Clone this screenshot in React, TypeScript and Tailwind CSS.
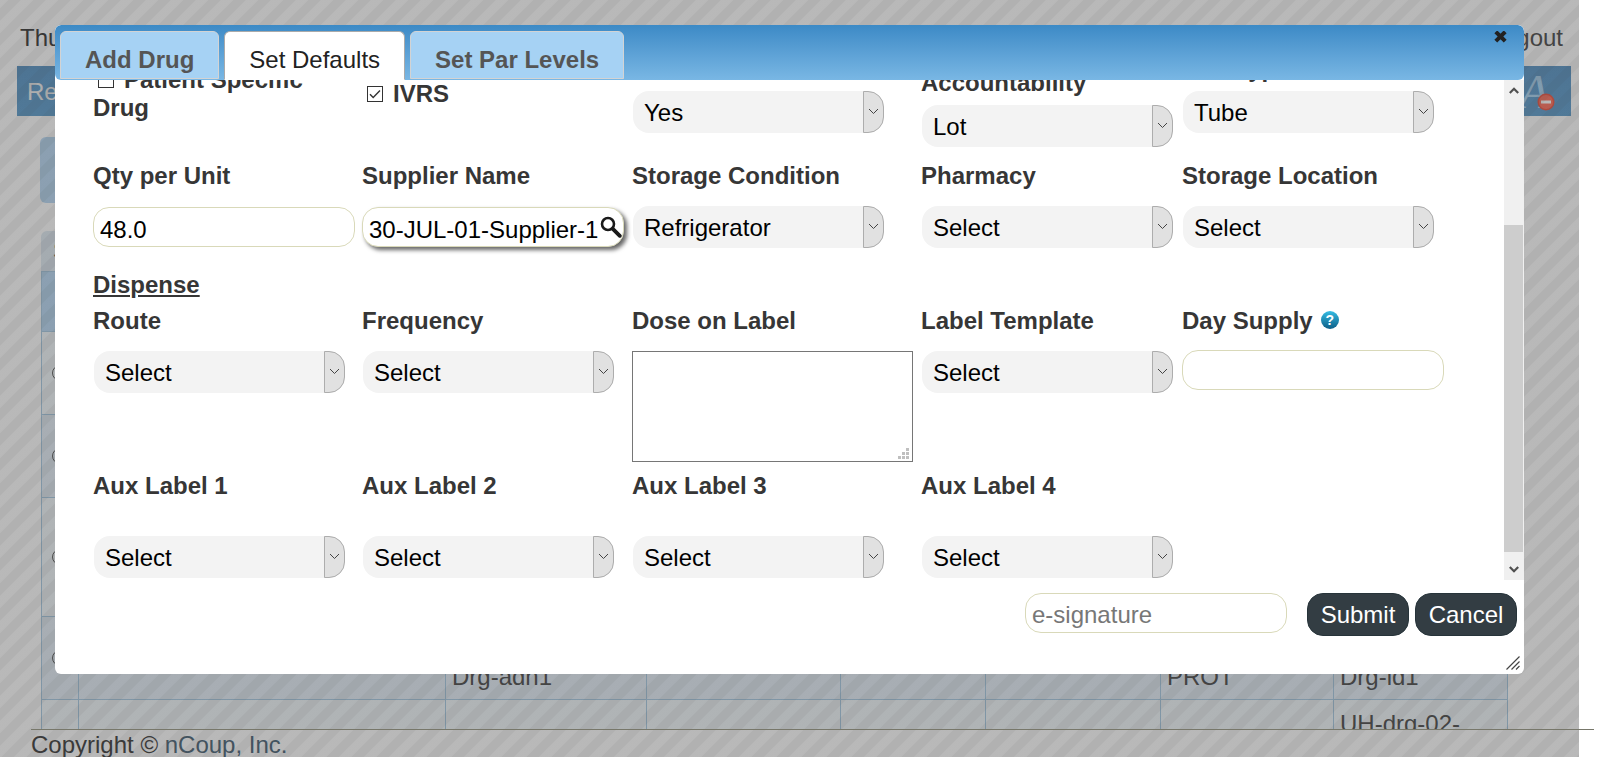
import React, { useId } from "react";
import { clsx } from "clsx";

function Chevron() {
  return (
    <span className="pointer-events-none absolute inset-y-0 right-0 grid w-[21px] place-items-center rounded-r-2xl border border-[#adadad] bg-[#e1e1e1] pb-px">
      <svg width="11" height="7" viewBox="0 0 11 7" fill="none" stroke="#444" strokeWidth="1">
        <path d="M1 1l4.5 4.5L10 1" />
      </svg>
    </span>
  );
}

function SelectBox({ id, value, ariaLabel }: { id?: string; value: string; ariaLabel?: string }) {
  return (
    <div className="relative ml-px w-[251px]">
      <select
        id={id}
        aria-label={ariaLabel}
        defaultValue={value}
        className="block h-[42px] w-full appearance-none rounded-2xl bg-[#f3f3f3] pt-0.5 pr-6 pl-[11px] text-black"
      >
        <option>{value}</option>
      </select>
      <Chevron />
    </div>
  );
}

const inputClass =
  "block h-10 w-[262px] rounded-2xl border border-[#d9d9b9] bg-white px-1.5 text-black placeholder:text-[#777]";

type FieldProps = {
  label: React.ReactNode;
  gap?: string;
  render: (id: string) => React.ReactNode;
};

function Field({ label, gap = "gap-4", render }: FieldProps) {
  const id = useId();
  return (
    <div className={clsx("flex flex-col items-start", gap)}>
      <label htmlFor={id} className="font-bold">
        {label}
      </label>
      {render(id)}
    </div>
  );
}

function SelectField({ label, value = "Select", gap }: { label: React.ReactNode; value?: string; gap?: string }) {
  return <Field label={label} gap={gap} render={(id) => <SelectBox id={id} value={value} />} />;
}

function Check({ label, checked = false }: { label: string; checked?: boolean }) {
  return (
    <label className="block font-bold">
      <span className="relative mr-2.5 ml-[5px] inline-block size-4">
        <input
          type="checkbox"
          defaultChecked={checked}
          className="peer block size-4 appearance-none border border-[#333] bg-white"
        />
        <svg
          viewBox="0 0 16 16"
          className="pointer-events-none absolute inset-0 hidden peer-checked:block"
          fill="none"
          stroke="#333"
          strokeWidth="1.4"
        >
          <path d="M3 8.2l3.2 3.3L13 4.6" />
        </svg>
      </span>
      {label}
    </label>
  );
}

const rowClass = "grid grid-cols-[269fr_270fr_289fr_261fr_322fr]";

function HelpIcon() {
  return (
    <span className="ml-2 inline-grid size-[18px] place-items-center rounded-full bg-linear-to-b from-[#36bde3] to-[#0d5f88] align-[4px] text-sm leading-none text-white">
      ?
    </span>
  );
}

const cellBorder = "border border-[#a6c9e2] px-1.5";

function BackgroundTable() {
  const rows = [
    { height: "h-[83px]", tone: "bg-[#f1f7fa]", align: "align-bottom pb-2", cells: ["", "", "", "", "", "", ""] },
    { height: "h-[83px]", tone: "bg-[#e4eef7]", align: "align-bottom pb-2", cells: ["", "", "", "", "", "", ""] },
    { height: "h-[119px]", tone: "bg-[#f1f7fa]", align: "align-bottom pb-2", cells: ["", "", "", "", "", "", ""] },
    {
      height: "h-[83px]",
      tone: "bg-[#e4eef7]",
      align: "align-bottom pb-2",
      cells: ["", "Drg-adn1", "", "", "", "PROT", "Drg-id1"],
    },
    {
      height: "h-[83px]",
      tone: "bg-[#f1f7fa]",
      align: "align-top pt-2.5",
      cells: ["", "", "", "", "", "", "UH-drg-02-"],
    },
  ];
  return (
    <div className="mt-7 mr-[72px] ml-[41px]">
      <div className="h-10 rounded-t-md bg-[#dfeaf3] pt-1.5 pl-3">S</div>
      <table className="w-full table-fixed border-collapse">
        <colgroup>
          <col className="w-[37px]" />
          <col className="w-[367px]" />
          <col className="w-[201px]" />
          <col className="w-[194px]" />
          <col className="w-[145px]" />
          <col className="w-[175px]" />
          <col className="w-[173px]" />
          <col className="w-[174px]" />
        </colgroup>
        <thead>
          <tr className="h-[60px] bg-[#b8d8f4]">
            {Array.from({ length: 8 }, (_, i) => (
              <th key={i} className={cellBorder} />
            ))}
          </tr>
        </thead>
        <tbody>
          {rows.map((row, r) => (
            <tr key={r} className={clsx(row.height, row.tone)}>
              <td className="border border-[#a6c9e2] text-center align-middle">
                <input
                  type="radio"
                  name="drug"
                  aria-label={`Row ${r + 1}`}
                  className={clsx(
                    "size-4 appearance-none rounded-full border border-[#555]",
                    r === 4 && "invisible",
                  )}
                />
              </td>
              {row.cells.map((text, c) => (
                <td key={c} className={clsx(cellBorder, row.align)}>
                  {text}
                </td>
              ))}
            </tr>
          ))}
        </tbody>
      </table>
    </div>
  );
}

function Backdrop() {
  return (
    <div className="h-full overflow-hidden pr-[21px] text-[#484848]">
      <header className="flex h-[66px] justify-between pt-6 pr-4 pl-5">
        <span className="text-[#333]">Thu</span>
        <a href="#logout">Logout</a>
      </header>
      <nav className="mr-2 ml-[17px] flex h-[50px] items-center justify-between bg-linear-to-b from-[#5793c4] to-[#5c9ccc] pt-0.5 pr-[22px] pl-2.5 text-[#eee]">
        <a href="#re">Re</a>
        <span className="relative block font-['Liberation_Serif',serif] text-5xl text-[#a8d2f0] italic">
          A
          <svg viewBox="0 0 18 18" className="absolute top-[25px] left-[17px] size-[18px]">
            <circle cx="9" cy="9" r="8.5" fill="#f0523f" />
            <circle cx="9" cy="9" r="7" fill="#ff6f5c" />
            <rect x="4" y="7.5" width="10" height="3" fill="#fff" />
          </svg>
        </span>
      </nav>
      <div className="mt-[21px] mr-[72px] ml-10 h-[66px] rounded-md bg-[#b8d8f4]" />
      <BackgroundTable />
    </div>
  );
}

function DialogHeader() {
  const idle = "border-[#d3d3d3] bg-[#a6d2f4] font-bold text-[#555] mb-px";
  const active = "border-[#aaa] border-b-white bg-white pb-0.5 text-[#222]";
  const tabs = ["Add Drug", "Set Defaults", "Set Par Levels"];
  return (
    <div className="flex h-[55px] shrink-0 items-stretch justify-between rounded-md bg-linear-to-b from-[#3c8ac6] to-[#79b7e4] pt-1.5 pl-[5px]">
      <div role="tablist" className="flex gap-[5px]">
        {tabs.map((tab, i) => (
          <button
            key={tab}
            role="tab"
            aria-selected={i === 1}
            className={clsx("rounded-t-md border px-6 pt-2.5", i === 1 ? active : idle)}
          >
            {tab}
          </button>
        ))}
      </div>
      <button aria-label="Close" className="mr-[17px] self-start">
        <svg width="13" height="12" viewBox="0 0 13 12" stroke="#222" strokeWidth="4" fill="none">
          <path d="M1.8.8l9.4 9.4M11.2.8L1.8 10.2" />
        </svg>
      </button>
    </div>
  );
}

function Scrollbar() {
  return (
    <div aria-hidden="true" className="flex w-5 shrink-0 flex-col bg-[#f0f0f0]">
      <div className="grid h-5 place-items-center">
        <svg width="10" height="7" viewBox="0 0 10 7" fill="none" stroke="#505050" strokeWidth="2.2">
          <path d="M.8 6L5 1.8 9.2 6" />
        </svg>
      </div>
      <div className="grow-125" />
      <div className="mr-px grow-327 bg-[#cdcdcd]" />
      <div className="grid h-7 place-items-center pt-1.5">
        <svg width="10" height="7" viewBox="0 0 10 7" fill="none" stroke="#505050" strokeWidth="2.2">
          <path d="M.8 1L5 5.2 9.2 1" />
        </svg>
      </div>
    </div>
  );
}

function DefaultsForm() {
  return (
    <div className="flex grow flex-col justify-end overflow-hidden pb-0.5 pl-[38px]">
      <div className={clsx(rowClass, "shrink-0 items-center")}>
        <Check label="Patient Specific Drug" />
        <Check label="IVRS" checked />
        <div className="flex flex-col items-start gap-2">
          <div className="h-7" />
          <SelectBox value="Yes" ariaLabel="Blinded" />
        </div>
        <SelectField
          label={
            <>
              Drug
              <br />
              Accountability
            </>
          }
          value="Lot"
          gap="gap-2"
        />
        <SelectField label="Unit Type" value="Tube" gap="gap-2" />
      </div>

      <div className={clsx(rowClass, "mt-[15px] shrink-0")}>
        <Field
          label="Qty per Unit"
          render={(id) => <input id={id} defaultValue="48.0" className={clsx(inputClass, "mt-px pt-1.5")} />}
        />
        <Field
          label="Supplier Name"
          render={(id) => (
            <div className="relative mt-px">
              <input
                id={id}
                defaultValue="30-JUL-01-Supplier-1"
                className={clsx(inputClass, "pt-1.5 shadow-[3px_3px_4px_rgba(0,0,0,0.6)]")}
              />
              <svg
                viewBox="0 0 22 22"
                className="pointer-events-none absolute top-[9px] right-0.5 size-[22px]"
                fill="none"
                stroke="#1a1a1a"
                strokeLinecap="round"
              >
                <circle cx="8" cy="8" r="6" strokeWidth="2.6" />
                <path d="M12.8 12.8l7 7" strokeWidth="3.8" />
              </svg>
            </div>
          )}
        />
        <SelectField label="Storage Condition" value="Refrigerator" />
        <SelectField label="Pharmacy" />
        <SelectField label="Storage Location" />
      </div>

      <h2 className="mt-[23px] shrink-0 font-bold underline">Dispense</h2>

      <div className={clsx(rowClass, "mt-2 shrink-0")}>
        <SelectField label="Route" />
        <SelectField label="Frequency" />
        <Field
          label="Dose on Label"
          render={(id) => (
            <div className="relative">
              <textarea id={id} className="block h-[111px] w-[281px] resize-none border border-[#767676] bg-white p-1" />
              <svg viewBox="0 0 11 11" className="pointer-events-none absolute right-1 bottom-[3px] size-[11px]" fill="#bfbfbf">
                <path d="M8 0h3v3H8zM4 4h3v3H4zM8 4h3v3H8zM0 8h3v3H0zM4 8h3v3H4zM8 8h3v3H8z" />
              </svg>
            </div>
          )}
        />
        <SelectField label="Label Template" />
        <Field
          label={
            <>
              Day Supply
              <HelpIcon />
            </>
          }
          gap="gap-[15px]"
          render={(id) => <input id={id} className={inputClass} />}
        />
      </div>

      <div className={clsx(rowClass, "mt-2.5 shrink-0")}>
        <SelectField label="Aux Label 1" gap="gap-9" />
        <SelectField label="Aux Label 2" gap="gap-9" />
        <SelectField label="Aux Label 3" gap="gap-9" />
        <SelectField label="Aux Label 4" gap="gap-9" />
      </div>
    </div>
  );
}

function DialogFooter() {
  const button = "h-[43px] w-[102px] rounded-2xl border border-[#27343a] bg-[#333d43] text-white";
  return (
    <div className="flex items-start justify-end gap-1.5 pt-[13px] pr-[7px]">
      <input aria-label="e-signature" placeholder="e-signature" className={clsx(inputClass, "mr-3.5 pt-1")} />
      <button className={button}>Submit</button>
      <button className={button}>Cancel</button>
    </div>
  );
}

export default function App() {
  return (
    <div className="relative h-screen overflow-hidden bg-white font-['Liberation_Sans',Arial,sans-serif] text-[24px] leading-7">
      <div className="flex h-full flex-col">
        <div className="min-h-0 grow">
          <Backdrop />
        </div>
        <footer className="relative z-10 mr-1.5 ml-[31px] h-7 shrink-0 border-t border-[#77776a] pt-px text-[#3a3a3a]">
          Copyright © <a href="#ncoup" className="text-[#43535f]">nCoup, Inc.</a>
        </footer>
      </div>

      <div className="absolute inset-y-0 right-[21px] left-0 bg-[linear-gradient(135deg,rgba(60,60,60,0.36)_15%,rgba(60,60,60,0.4)_18%,rgba(60,60,60,0.4)_40%,rgba(60,60,60,0.36)_43%,rgba(60,60,60,0.36)_65%,rgba(60,60,60,0.4)_68%,rgba(60,60,60,0.4)_90%,rgba(60,60,60,0.36)_93%)] bg-size-[25px_25px]" />

      <div
        role="dialog"
        aria-label="Set Defaults"
        className="absolute top-[25px] right-[76px] left-[55px] z-20 flex flex-col overflow-hidden rounded-md bg-white pb-[38px] text-[#363636]"
      >
        <DialogHeader />
        <div className="flex h-[500px]">
          <DefaultsForm />
          <Scrollbar />
        </div>
        <DialogFooter />
        <svg
          viewBox="0 0 14 14"
          className="absolute right-1 bottom-1 size-3.5"
          fill="none"
          stroke="#444"
          strokeWidth="1.2"
        >
          <path d="M.5 13.5l13-13M5.5 13.5l8-8M10 13.5l3.5-3.5" />
        </svg>
      </div>
    </div>
  );
}
